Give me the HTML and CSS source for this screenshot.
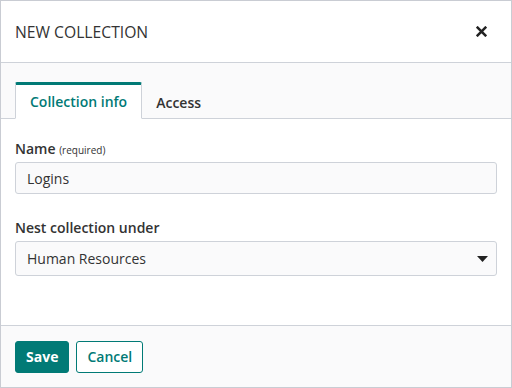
FILE: index.html
```html
<!DOCTYPE html>
<html lang="en">
<head>
    <meta charset="UTF-8">
    <title>New collection</title>
    <link rel="stylesheet" href="styles.css">
</head>
<body>
    <div class="modal">
        <div class="modal-header">
            <h2 class="modal-title">NEW COLLECTION</h2>
            <button class="close" type="button">
                <svg width="11" height="11" viewBox="0 0 10 10"><path d="M1.5 1.5 L8.5 8.5 M8.5 1.5 L1.5 8.5" stroke="#222" stroke-width="2.3" stroke-linecap="square"/></svg>
            </button>
        </div>

        <div class="tab-bar">
            <div class="tab active">Collection info</div>
            <div class="tab">Access</div>
        </div>

        <div class="modal-body">
            <div class="form-group">
                <label>Name <small>(required)</small></label>
                <div class="input">Logins</div>
            </div>
            <div class="form-group">
                <label>Nest collection under</label>
                <div class="select">
                    <span>Human Resources</span>
                    <svg width="11" height="6" viewBox="0 0 11 6"><path d="M0 0 H11 L5.5 6 Z" fill="#222"/></svg>
                </div>
            </div>
        </div>

        <div class="modal-footer">
            <button class="btn btn-primary">Save</button>
            <button class="btn btn-outline">Cancel</button>
        </div>
    </div>
</body>
</html>
```

FILE: styles.css
```css
body {
    margin: 0;
    font-family: "Open Sans", sans-serif;
    font-size: 14px;
    color: #333;
}

.modal {
    width: 512px;
    height: 388px;
    box-sizing: border-box;
    border: 1px solid #c9ccd3;
    display: flex;
    flex-direction: column;
    background-color: white;
}

.modal-header {
    height: 61px;
    padding: 0 14px;
    display: flex;
    align-items: center;
    justify-content: space-between;
    border-bottom: 1px solid #ced2d9;
}

.modal-title {
    margin: 0;
    font-size: 15.7px;
    font-weight: 400;
    color: #333;
}

.close {
    border: none;
    background: none;
    padding: 0;
    margin-right: 10px;
    display: flex;
}

.tab-bar {
    height: 56px;
    box-sizing: border-box;
    background-color: #fafafb;
    border-bottom: 1px solid #ced2d9;
    display: flex;
    align-items: flex-end;
    padding-left: 14px;
}

.tab {
    height: 33px;
    padding: 0 14px;
    display: flex;
    align-items: center;
    font-weight: 600;
    color: #333;
    margin-bottom: -1px;
}

.tab.active {
    background-color: white;
    color: #017a76;
    border: 1px solid #ced2d9;
    border-top: 3px solid #017a76;
    border-bottom: 1px solid white;
    border-radius: 2px 2px 0 0;
}

.modal-body {
    flex: 1;
    padding: 20px 14px 0;
}

.form-group {
    margin-bottom: 24px;
}

label {
    display: block;
    font-weight: 600;
    margin-bottom: 4px;
}

label small {
    font-size: 10px;
    font-weight: 400;
}

.input,
.select {
    box-sizing: border-box;
    height: 32px;
    border: 1px solid #ced2d9;
    border-radius: 3px;
    background-color: #fafafb;
    padding: 0 11px;
    display: flex;
    align-items: center;
}

.select {
    height: 35px;
    justify-content: space-between;
    padding-right: 8px;
}

.modal-footer {
    height: 62px;
    box-sizing: border-box;
    background-color: #fafafb;
    border-top: 1px solid #ced2d9;
    padding: 0 14px;
    display: flex;
    align-items: center;
    gap: 7px;
}

.btn {
    height: 32px;
    padding: 0 10px;
    border-radius: 3px;
    font-family: "Open Sans", sans-serif;
    font-size: 14px;
    font-weight: 600;
}

.btn-primary {
    background-color: #017a76;
    border: 1px solid #017a76;
    color: white;
    font-weight: 700;
}

.btn-outline {
    background-color: white;
    border: 1px solid #017a76;
    color: #017a76;
}
```
